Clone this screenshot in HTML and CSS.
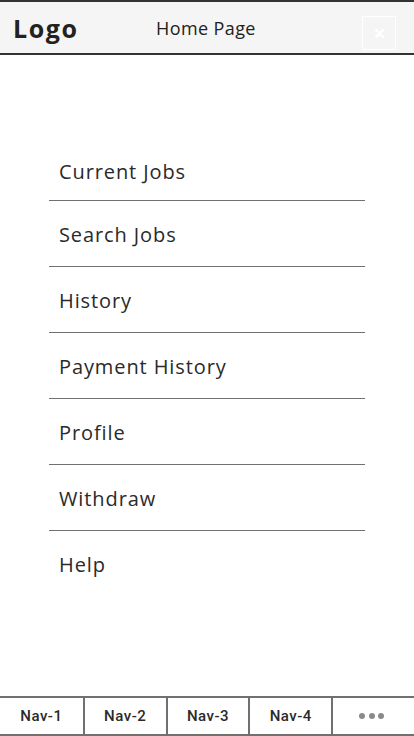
FILE: index.html
```html
<!DOCTYPE html>
<html lang="en">
<head>
<meta charset="utf-8">
<title>Home Page</title>
<link rel="stylesheet" href="styles.css">
</head>
<body>
<div class="page">
  <header class="topbar">
    <div class="logo">Logo</div>
    <div class="title">Home Page</div>
    <button class="close" aria-label="Close">
      <svg width="9" height="9" viewBox="0 0 9 9"><path d="M1.2 1.2 L7.8 7.8 M7.8 1.2 L1.2 7.8" stroke="#fff" stroke-width="2.4" stroke-linecap="round"/></svg>
    </button>
  </header>
  <main class="content">
    <ul class="menu">
      <li class="menu-item">Current Jobs</li>
      <li class="menu-item">Search Jobs</li>
      <li class="menu-item">History</li>
      <li class="menu-item">Payment History</li>
      <li class="menu-item">Profile</li>
      <li class="menu-item">Withdraw</li>
      <li class="menu-item">Help</li>
    </ul>
  </main>
  <nav class="tabbar">
    <div class="tab">Nav-1</div>
    <div class="tab">Nav-2</div>
    <div class="tab">Nav-3</div>
    <div class="tab">Nav-4</div>
    <div class="tab"><span class="dots"><i></i><i></i><i></i></span></div>
  </nav>
</div>
</body>
</html>
```
FILE: styles.css
```css
* { box-sizing: border-box; }
html, body { margin: 0; padding: 0; background: #fff; }
body { font-family: "Open Sans", "Liberation Sans", sans-serif; color: #262626; }

.page {
  width: 414px;
  height: 736px;
  display: flex;
  flex-direction: column;
}

.topbar {
  height: 55px;
  border-top: 2px solid #333;
  border-bottom: 2px solid #333;
  background: #f5f5f5;
  display: grid;
  grid-template-columns: 156px 1fr auto;
  align-items: center;
}
.logo {
  padding-left: 13px;
  font-size: 25px;
  font-weight: 700;
  letter-spacing: 1.6px;
  color: #222;
}
.title {
  font-size: 18px;
  letter-spacing: 0.4px;
  color: #222;
}
.close {
  align-self: start;
  margin: 14px 18px 0 0;
  width: 34px;
  height: 34px;
  padding: 0;
  border: 1px solid #fff;
  background: transparent;
  display: flex;
  align-items: center;
  justify-content: center;
}

.content { flex: 1; }
.menu {
  list-style: none;
  margin: 84px auto 0;
  padding: 0;
  width: 316px;
}
.menu-item {
  padding: 22px 0 19px 10px;
  font-size: 20px;
  line-height: 24px;
  letter-spacing: 0.9px;
  color: #2a2a2a;
  border-bottom: 1px solid #707070;
}
.menu-item:first-child { padding: 21px 0 16px 10px; }
.menu-item:last-child { border-bottom: none; }

.tabbar {
  height: 40px;
  border-top: 2px solid #707070;
  border-bottom: 2px solid #707070;
  display: grid;
  grid-template-columns: repeat(5, 1fr);
}
.tab {
  display: flex;
  align-items: center;
  justify-content: center;
  font-family: Roboto, "Open Sans", sans-serif;
  font-size: 15px;
  font-weight: 500;
  letter-spacing: 0.5px;
  color: #2a2a2a;
}
.tab + .tab { border-left: 2px solid #707070; }
.dots { display: flex; gap: 3.5px; margin-left: -4px; }
.dots i {
  display: block;
  width: 6px;
  height: 6px;
  border-radius: 50%;
  background: #8a8a8a;
}
```
